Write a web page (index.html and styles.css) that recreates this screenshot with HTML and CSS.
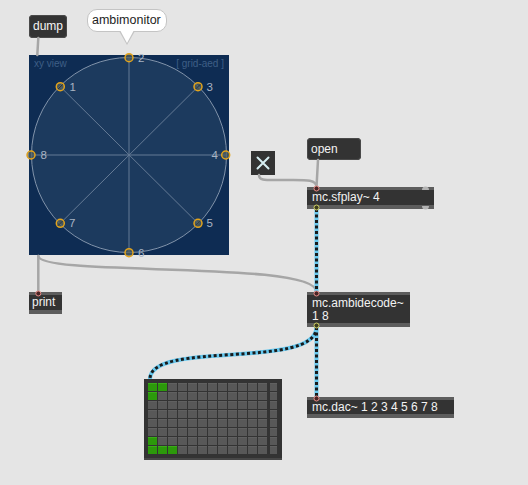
FILE: index.html
```html
<!DOCTYPE html>
<html>
<head>
<meta charset="utf-8">
<link rel="stylesheet" href="styles.css">
</head>
<body>
<div class="patcher">
  <div class="msg dump">dump</div>
  <div class="bubble">ambimonitor</div>

  <div class="ambi">
    <svg width="200" height="200" viewBox="0 0 200 200">
      <rect width="200" height="200" fill="#0e2c53"/>
      <circle cx="100" cy="100" r="97.5" fill="#1c3a5e" stroke="#8193aa" stroke-width="1"/>
      <g stroke="#8496ad" stroke-width="1" opacity="0.7">
        <line x1="100" y1="2.7" x2="100" y2="197.7"/>
        <line x1="2" y1="100" x2="197.7" y2="100"/>
        <line x1="31.3" y1="31.7" x2="169" y2="168.3"/>
        <line x1="169" y1="31.7" x2="31.3" y2="168.3"/>
      </g>
      <text class="cap" x="5" y="12">xy view</text>
      <text class="cap" x="195" y="12" text-anchor="end">[ grid-aed ]</text>
      <g class="spk" fill="#53605f" fill-opacity="0.75" stroke="#e3a41c" stroke-width="1.5">
        <circle cx="31.3" cy="31.7" r="4"/>
        <circle cx="100" cy="2.7" r="4"/>
        <circle cx="169" cy="31.7" r="4"/>
        <circle cx="196.7" cy="100" r="4"/>
        <circle cx="169" cy="168.3" r="4"/>
        <circle cx="100" cy="197.7" r="4"/>
        <circle cx="31.3" cy="168.3" r="4"/>
        <circle cx="2" cy="100" r="4"/>
      </g>
      <g stroke="#2a3438" stroke-width="1">
        <line x1="29" y1="34" x2="33.6" y2="29.4"/>
        <line x1="166.7" y1="34" x2="171.3" y2="29.4"/>
        <line x1="166.7" y1="170.6" x2="171.3" y2="166"/>
        <line x1="29" y1="170.6" x2="33.6" y2="166"/>
      </g>
      <g class="lbl">
        <text x="40.5" y="35.7">1</text>
        <text x="109" y="6.7">2</text>
        <text x="177.5" y="35.7">3</text>
        <text x="189" y="104" text-anchor="end">4</text>
        <text x="177.5" y="172.3">5</text>
        <text x="109" y="201.7">6</text>
        <text x="40" y="172.3">7</text>
        <text x="11.5" y="104">8</text>
      </g>
    </svg>
  </div>

  <div class="toggle">
    <svg width="24" height="24" viewBox="0 0 24 24">
      <path d="M6.5 6.5 L17.5 17.5 M17.5 6.5 L6.5 17.5" stroke="#d6eef2" stroke-width="2" stroke-linecap="round"/>
    </svg>
  </div>
  <div class="msg open">open</div>
  <div class="obj sfplay">mc.sfplay~ 4</div>
  <div class="obj print">print</div>
  <div class="obj ambidecode">mc.ambidecode~<br>1 8</div>

  <div class="matrix">
    <div class="cell on"></div><div class="cell on"></div><div class="cell"></div><div class="cell"></div><div class="cell"></div><div class="cell"></div><div class="cell"></div><div class="cell"></div><div class="cell"></div><div class="cell"></div><div class="cell"></div><div class="cell"></div><div class="cell last"></div>
    <div class="cell on"></div><div class="cell"></div><div class="cell"></div><div class="cell"></div><div class="cell"></div><div class="cell"></div><div class="cell"></div><div class="cell"></div><div class="cell"></div><div class="cell"></div><div class="cell"></div><div class="cell"></div><div class="cell last"></div>
    <div class="cell"></div><div class="cell"></div><div class="cell"></div><div class="cell"></div><div class="cell"></div><div class="cell"></div><div class="cell"></div><div class="cell"></div><div class="cell"></div><div class="cell"></div><div class="cell"></div><div class="cell"></div><div class="cell last"></div>
    <div class="cell"></div><div class="cell"></div><div class="cell"></div><div class="cell"></div><div class="cell"></div><div class="cell"></div><div class="cell"></div><div class="cell"></div><div class="cell"></div><div class="cell"></div><div class="cell"></div><div class="cell"></div><div class="cell last"></div>
    <div class="cell"></div><div class="cell"></div><div class="cell"></div><div class="cell"></div><div class="cell"></div><div class="cell"></div><div class="cell"></div><div class="cell"></div><div class="cell"></div><div class="cell"></div><div class="cell"></div><div class="cell"></div><div class="cell last"></div>
    <div class="cell"></div><div class="cell"></div><div class="cell"></div><div class="cell"></div><div class="cell"></div><div class="cell"></div><div class="cell"></div><div class="cell"></div><div class="cell"></div><div class="cell"></div><div class="cell"></div><div class="cell"></div><div class="cell last"></div>
    <div class="cell on"></div><div class="cell"></div><div class="cell"></div><div class="cell"></div><div class="cell"></div><div class="cell"></div><div class="cell"></div><div class="cell"></div><div class="cell"></div><div class="cell"></div><div class="cell"></div><div class="cell"></div><div class="cell last"></div>
    <div class="cell on"></div><div class="cell on"></div><div class="cell on"></div><div class="cell"></div><div class="cell"></div><div class="cell"></div><div class="cell"></div><div class="cell"></div><div class="cell"></div><div class="cell"></div><div class="cell"></div><div class="cell"></div><div class="cell last"></div>
  </div>

  <div class="obj dac">mc.dac~ 1 2 3 4 5 6 7 8</div>

  <svg class="cords" width="528" height="485" viewBox="0 0 528 485">
    <g fill="none" stroke="#a6a6a6" stroke-width="2.5" stroke-linecap="round">
      <path d="M38.3 38 L37.3 55"/>
      <path d="M318 160 L316.5 187"/>
      <path d="M259 175 C259 181 265 180 285 180 C305 180 316.5 179 316.5 187"/>
      <path d="M38.3 256 L38.3 292"/>
      <path d="M38.3 256 C40 277 316.5 260 316.5 292"/>
    </g>
    <g fill="none" stroke="#66c8ef" stroke-width="4">
      <path d="M316.5 209 L316.5 292"/>
      <path d="M316.5 327 C316.5 370 150 340 150 379"/>
      <path d="M316.5 327 L316.5 397"/>
    </g>
    <g fill="none" stroke="#1a1a1a" stroke-width="3" stroke-dasharray="3 2.5">
      <path d="M316.5 209 L316.5 292"/>
      <path d="M316.5 327 C316.5 370 150 340 150 379"/>
      <path d="M316.5 327 L316.5 397"/>
    </g>
    <g fill="#4a2626" stroke="#e58b86" stroke-width="1">
      <circle cx="316.5" cy="188.5" r="2.5"/>
      <circle cx="316.5" cy="293.5" r="2.5"/>
      <circle cx="316.5" cy="398.5" r="2.5"/>
      <circle cx="38.3" cy="293.5" r="2.5"/>
    </g>
    <g fill="#3d3d20" stroke="#cfd064" stroke-width="1">
      <circle cx="316.5" cy="207.5" r="2.5"/>
      <circle cx="316.5" cy="325.5" r="2.5"/>
    </g>
    <g fill="#b4b4b4">
      <path d="M422 190 A3.5 3.5 0 0 1 429 190 Z"/>
      <path d="M422 206 A3.5 3.5 0 0 0 429 206 Z"/>
    </g>
  </svg>
</div>
</body>
</html>
```

FILE: styles.css
```css
html, body {
  margin: 0;
  padding: 0;
  background: #e5e5e5;
}

.patcher {
  position: relative;
  width: 528px;
  height: 485px;
  overflow: hidden;
  font-family: "Liberation Sans", Arial, sans-serif;
  font-size: 12px;
}

.msg {
  position: absolute;
  box-sizing: border-box;
  background: #333333;
  color: #f4f4f4;
  border-radius: 4px;
  padding-left: 4px;
  box-shadow: inset 0 0 0 1px #4a4a4a;
}

.dump {
  left: 29px;
  top: 15px;
  width: 38px;
  height: 23px;
  line-height: 23px;
}

.open {
  left: 307px;
  top: 138px;
  width: 54px;
  height: 22px;
  line-height: 22px;
}

.bubble {
  position: absolute;
  left: 87px;
  top: 9px;
  width: 80px;
  height: 23px;
  box-sizing: border-box;
  background: #ffffff;
  border: 1px solid #c4c4c4;
  border-radius: 10px;
  color: #1e1e1e;
  line-height: 20px;
  padding-left: 4px;
  font-size: 12.5px;
}

.bubble::before {
  content: "";
  position: absolute;
  left: 31px;
  top: 21px;
  border-left: 8px solid transparent;
  border-right: 8px solid transparent;
  border-top: 14px solid #c4c4c4;
}

.bubble::after {
  content: "";
  position: absolute;
  left: 32px;
  top: 20px;
  border-left: 7px solid transparent;
  border-right: 7px solid transparent;
  border-top: 13px solid #ffffff;
}

.ambi {
  position: absolute;
  left: 29px;
  top: 55px;
  width: 200px;
  height: 200px;
}

.ambi svg {
  display: block;
  overflow: visible;
}

.ambi .cap {
  fill: #3e5f86;
  font-family: "Liberation Sans", Arial, sans-serif;
  font-size: 10px;
}

.ambi .lbl text {
  fill: #a9b4c3;
  font-family: "Liberation Sans", Arial, sans-serif;
  font-size: 11.5px;
}

.toggle {
  position: absolute;
  left: 251px;
  top: 151px;
  width: 24px;
  height: 24px;
  background: #333333;
}

.toggle svg {
  display: block;
}

.obj {
  position: absolute;
  box-sizing: border-box;
  background: #333333;
  color: #f2f2f2;
  border-top: 3px solid #5d5d5d;
  border-bottom: 4px solid #5d5d5d;
  padding-left: 5px;
  line-height: 15px;
  white-space: nowrap;
}

.sfplay {
  left: 307px;
  top: 187px;
  width: 127px;
  height: 22px;
}

.print {
  left: 29px;
  top: 292px;
  width: 33px;
  height: 22px;
  padding-left: 3px;
}

.ambidecode {
  left: 307px;
  top: 292px;
  width: 103px;
  height: 35px;
  line-height: 13px;
  padding-top: 2px;
}

.dac {
  left: 307px;
  top: 397px;
  width: 147px;
  height: 21px;
  line-height: 14px;
}

.matrix {
  position: absolute;
  left: 144px;
  top: 379px;
  width: 138px;
  height: 81px;
  box-sizing: border-box;
  background: #333333;
  border-bottom: 2px solid #474747;
  padding: 4px;
  display: grid;
  grid-template-columns: repeat(12, 9px) 9px;
  grid-auto-rows: 8px;
  column-gap: 1px;
  row-gap: 1px;
}

.cell {
  background: #585858;
  box-shadow: inset 0 1px 0 #606060;
}

.cell.last {
  margin-left: 2px;
}

.cell.on {
  background: #2c990b;
  box-shadow: inset 0 1px 0 #3aac18;
}

.cords {
  position: absolute;
  left: 0;
  top: 0;
  pointer-events: none;
}
```
